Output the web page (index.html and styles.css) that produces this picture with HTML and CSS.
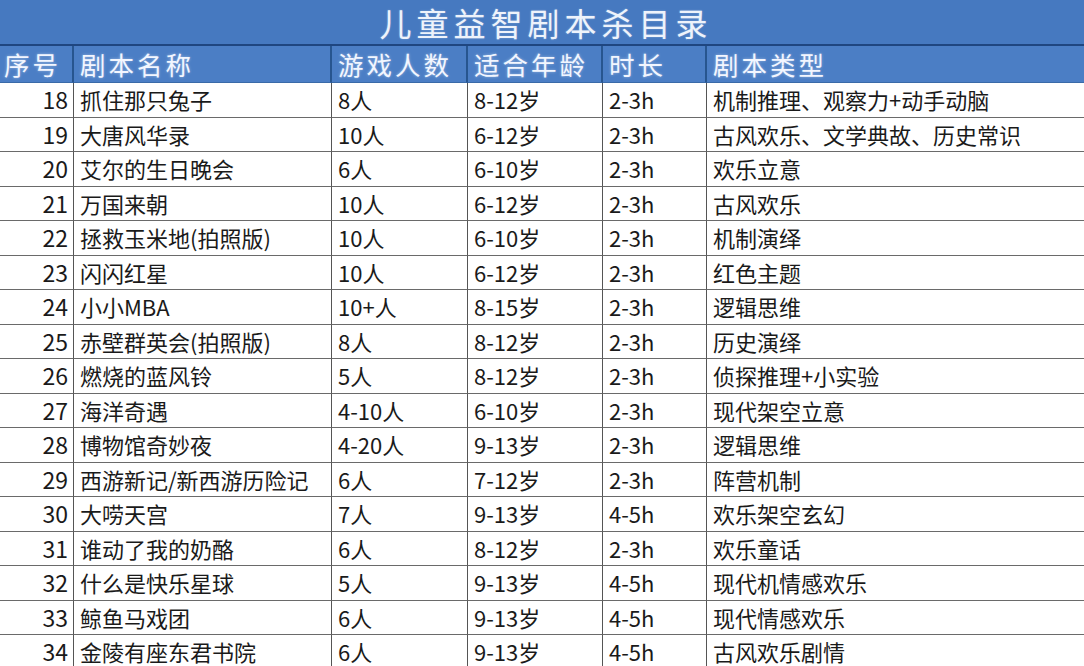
FILE: index.html
```html
<!DOCTYPE html>
<html lang="zh">
<head>
<meta charset="utf-8">
<link rel="stylesheet" href="styles.css">
</head>
<body>
<div class="sheet">
  <div class="title">儿童益智剧本杀目录</div>
  <div class="grid">
    <div class="h c1">序号</div><div class="h">剧本名称</div><div class="h">游戏人数</div><div class="h">适合年龄</div><div class="h">时长</div><div class="h last">剧本类型</div>

    <div class="c c1">18</div><div class="c">抓住那只兔子</div><div class="c">8人</div><div class="c">8-12岁</div><div class="c">2-3h</div><div class="c last">机制推理、观察力+动手动脑</div>
    <div class="c c1">19</div><div class="c">大唐风华录</div><div class="c">10人</div><div class="c">6-12岁</div><div class="c">2-3h</div><div class="c last">古风欢乐、文学典故、历史常识</div>
    <div class="c c1">20</div><div class="c">艾尔的生日晚会</div><div class="c">6人</div><div class="c">6-10岁</div><div class="c">2-3h</div><div class="c last">欢乐立意</div>
    <div class="c c1">21</div><div class="c">万国来朝</div><div class="c">10人</div><div class="c">6-12岁</div><div class="c">2-3h</div><div class="c last">古风欢乐</div>
    <div class="c c1">22</div><div class="c">拯救玉米地(拍照版)</div><div class="c">10人</div><div class="c">6-10岁</div><div class="c">2-3h</div><div class="c last">机制演绎</div>
    <div class="c c1">23</div><div class="c">闪闪红星</div><div class="c">10人</div><div class="c">6-12岁</div><div class="c">2-3h</div><div class="c last">红色主题</div>
    <div class="c c1">24</div><div class="c">小小MBA</div><div class="c">10+人</div><div class="c">8-15岁</div><div class="c">2-3h</div><div class="c last">逻辑思维</div>
    <div class="c c1">25</div><div class="c">赤壁群英会(拍照版)</div><div class="c">8人</div><div class="c">8-12岁</div><div class="c">2-3h</div><div class="c last">历史演绎</div>
    <div class="c c1">26</div><div class="c">燃烧的蓝风铃</div><div class="c">5人</div><div class="c">8-12岁</div><div class="c">2-3h</div><div class="c last">侦探推理+小实验</div>
    <div class="c c1">27</div><div class="c">海洋奇遇</div><div class="c">4-10人</div><div class="c">6-10岁</div><div class="c">2-3h</div><div class="c last">现代架空立意</div>
    <div class="c c1">28</div><div class="c">博物馆奇妙夜</div><div class="c">4-20人</div><div class="c">9-13岁</div><div class="c">2-3h</div><div class="c last">逻辑思维</div>
    <div class="c c1">29</div><div class="c">西游新记/新西游历险记</div><div class="c">6人</div><div class="c">7-12岁</div><div class="c">2-3h</div><div class="c last">阵营机制</div>
    <div class="c c1">30</div><div class="c">大唠天宫</div><div class="c">7人</div><div class="c">9-13岁</div><div class="c">4-5h</div><div class="c last">欢乐架空玄幻</div>
    <div class="c c1">31</div><div class="c">谁动了我的奶酪</div><div class="c">6人</div><div class="c">8-12岁</div><div class="c">2-3h</div><div class="c last">欢乐童话</div>
    <div class="c c1">32</div><div class="c">什么是快乐星球</div><div class="c">5人</div><div class="c">9-13岁</div><div class="c">4-5h</div><div class="c last">现代机情感欢乐</div>
    <div class="c c1">33</div><div class="c">鲸鱼马戏团</div><div class="c">6人</div><div class="c">9-13岁</div><div class="c">4-5h</div><div class="c last">现代情感欢乐</div>
    <div class="c c1">34</div><div class="c">金陵有座东君书院</div><div class="c">6人</div><div class="c">9-13岁</div><div class="c">4-5h</div><div class="c last">古风欢乐剧情</div>
  </div>
</div>
</body>
</html>
```

FILE: styles.css
```css
html, body {
  margin: 0;
  padding: 0;
  background: #ffffff;
}
body {
  width: 1084px;
  height: 666px;
  overflow: hidden;
  font-family: "Noto Sans CJK SC", "Noto Sans", sans-serif;
}
.sheet {
  display: flex;
  flex-direction: column;
}
.title {
  height: 44px;
  background: #4679c0;
  border-bottom: 2px solid #1f4680;
  color: #eef3fb;
  font-size: 32px;
  line-height: 45px;
  text-align: center;
  letter-spacing: 5px;
  padding-left: 8px;
  text-shadow: 0 0 2px rgba(255,255,255,0.35);
}
.grid {
  display: grid;
  grid-template-columns: 74px 258px 136px 135px 104px 1fr;
  grid-template-rows: 37px;
  grid-auto-rows: 34.5px;
}
.grid .h {
  box-sizing: border-box;
  background: #4b7ec5;
  color: #f2f6ff;
  font-size: 25.5px;
  line-height: 36px;
  letter-spacing: 3px;
  padding-left: 6px;
  border-right: 2px solid #27558f;
  border-bottom: 1px solid #3a6aa8;
  text-shadow: 0 0 3px rgba(255,255,255,0.45);
  white-space: nowrap;
}
.grid .h.c1 {
  padding-left: 4px;
}
.grid .h.last {
  border-right: none;
}
.c {
  box-sizing: border-box;
  color: #1a1a1a;
  font-size: 22px;
  line-height: 33px;
  padding-left: 6px;
  border-right: 1.5px solid #555;
  border-bottom: 1px solid #6a6a6a;
  white-space: nowrap;
  overflow: hidden;
}
.c.c1 {
  text-align: right;
  padding-left: 0;
  padding-right: 5px;
  font-size: 23px;
}
.c.last {
  border-right: none;
}
```
